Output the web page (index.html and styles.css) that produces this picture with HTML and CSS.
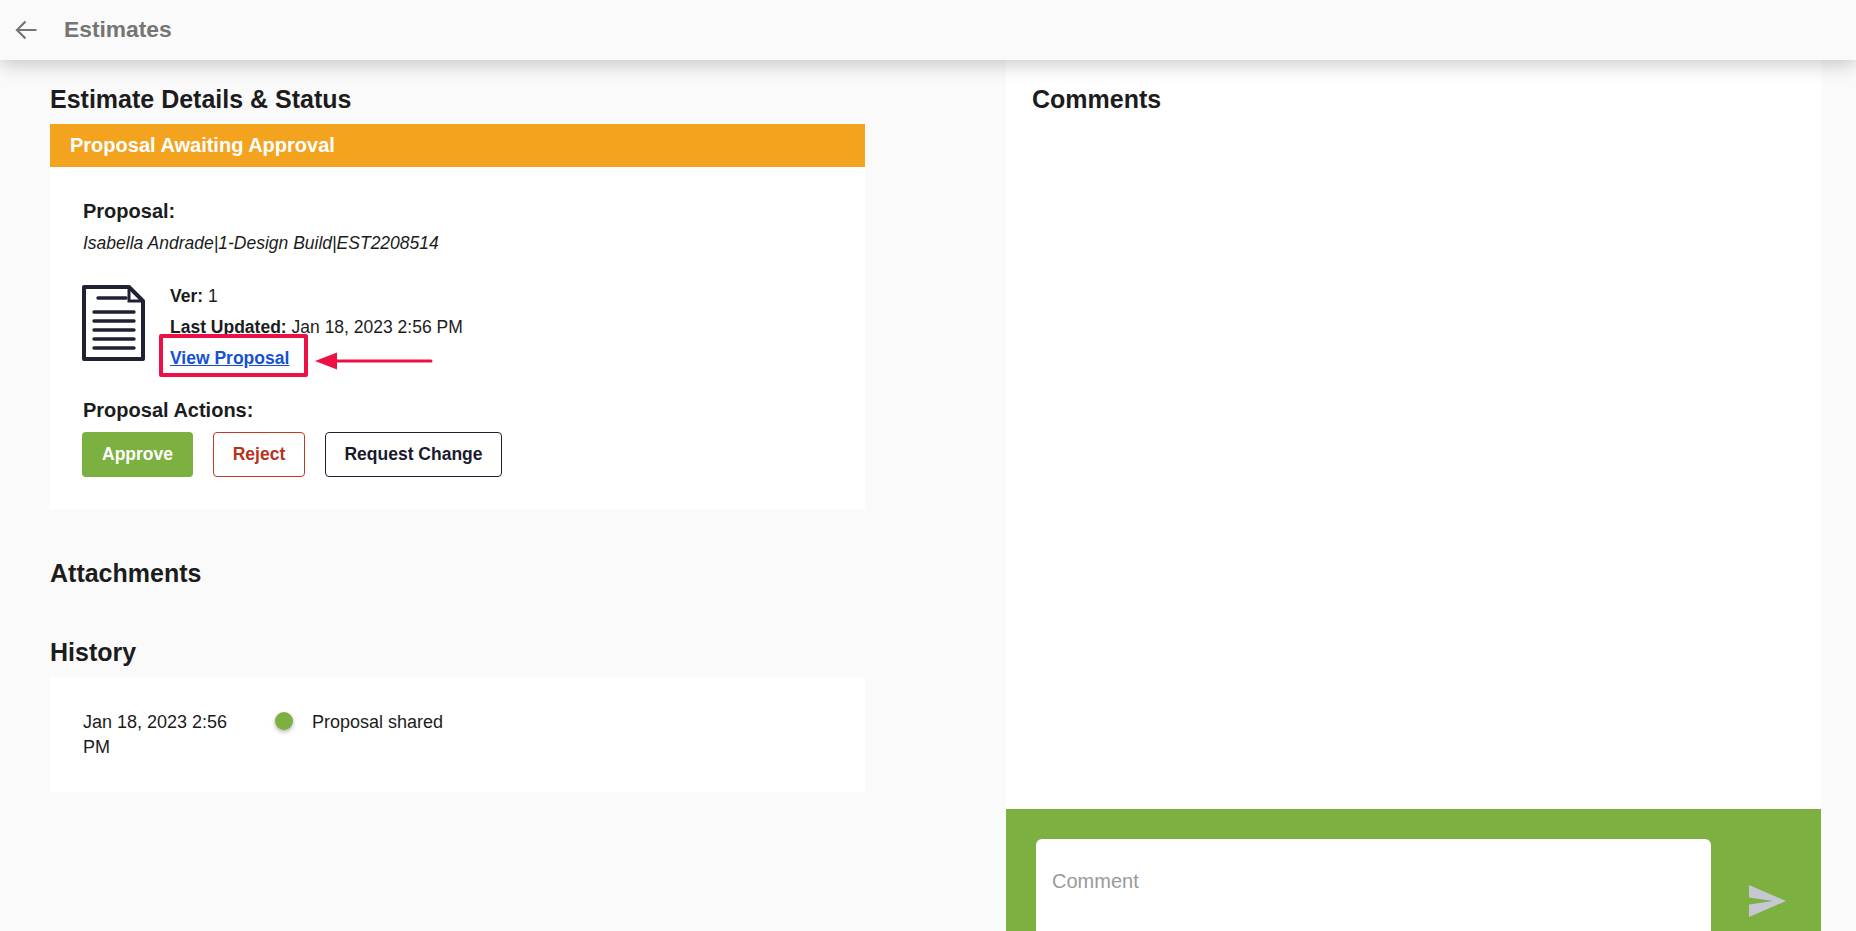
FILE: index.html
```html
<!DOCTYPE html>
<html lang="en">
<head>
<meta charset="utf-8">
<title>Estimates</title>
<link rel="stylesheet" href="styles.css">
</head>
<body>
<header class="topbar">
  <svg class="back" width="24" height="24" viewBox="0 0 24 24"><path d="M22.500 12H3.500M11.500 3.500L3 12l8.500 8.500" fill="none" stroke="#757575" stroke-width="2.200"/></svg>
  <span class="topbar-title">Estimates</span>
</header>
<main class="columns">
  <section class="left">
    <h2 class="heading first">Estimate Details &amp; Status</h2>
    <div class="banner">Proposal Awaiting Approval</div>
    <div class="card proposal">
      <div class="label">Proposal:</div>
      <div class="name">Isabella Andrade|1-Design Build|EST2208514</div>
      <div class="doc-row">
        <svg class="doc" width="63" height="76" viewBox="0 0 63 76">
          <path d="M2 2H47L61 16V74H2Z" fill="#fff" stroke="#1f2235" stroke-width="4" stroke-linejoin="round"/>
          <path d="M47 2V16H61" fill="none" stroke="#1f2235" stroke-width="3"/>
          <path d="M16 13H44M12 27H52M12 36H52M12 45H52M12 54H52M12 63H52" stroke="#1f2235" stroke-width="3.400" stroke-linecap="round"/>
        </svg>
        <div class="doc-info">
          <div class="info-line"><b>Ver:</b> 1</div>
          <div class="info-line"><b>Last Updated:</b> Jan 18, 2023 2:56 PM</div>
          <a class="view-link" href="#">View Proposal</a>
        </div>
      </div>
      <div class="label actions-label">Proposal Actions:</div>
      <div class="actions">
        <button class="btn approve">Approve</button>
        <button class="btn reject">Reject</button>
        <button class="btn change">Request Change</button>
      </div>
      <div class="callout"></div>
      <svg class="arrow" width="118" height="18" viewBox="0 0 118 18"><path d="M0 9L22 0.500V7.500H116a1.500 1.500 0 0 1 0 3H22V17.500Z" fill="#ee1044"/></svg>
    </div>
    <h2 class="heading attachments">Attachments</h2>
    <h2 class="heading history">History</h2>
    <div class="card history-card">
      <div class="history-date">Jan 18, 2023 2:56 PM</div>
      <span class="dot"></span>
      <div class="history-text">Proposal shared</div>
    </div>
  </section>
  <section class="right">
    <div class="comments">
      <h2 class="heading first">Comments</h2>
    </div>
    <div class="composer">
      <div class="comment-box">Comment</div>
      <svg class="send" width="38" height="32" viewBox="0 0 38 32"><path d="M0 0L37 16L0 32V19.500L24 16L0 12.500Z" fill="#c5c8d3"/></svg>
    </div>
  </section>
</main>
</body>
</html>
```
FILE: styles.css
```css
* { box-sizing: border-box; }
html, body { margin: 0; height: 100%; overflow: hidden; }
body { background: #fafafa; color: #1c1c1c; font-family: "Liberation Sans", Arial, sans-serif; font-size: 16px; }
.topbar { position: relative; z-index: 2; height: 60px; display: flex; align-items: center; background: #fafafa; padding-left: 14px; box-shadow: 0 4px 20px rgba(0,0,0,.22); }
.topbar-title { margin-left: 26px; padding-bottom: 2px; font-size: 22.800px; font-weight: 700; color: #757575; }
.back { display: block; }
.columns { display: flex; height: 871px; padding-left: 50px; }
.left { width: 815px; flex: none; }
.right { width: 815px; flex: none; margin-left: 141px; display: flex; flex-direction: column; }
.heading { margin: 0; font-size: 25px; line-height: 30px; font-weight: 700; color: #1c1c1c; }
.heading.first { padding-top: 24px; height: 64px; }
.banner { height: 43px; background: #f4a31f; color: #fff; font-size: 20px; font-weight: 700; line-height: 43px; padding-left: 20px; }
.card { background: #fff; position: relative; }
.proposal { height: 342px; padding: 32px 32px 0; }
.label { font-size: 20px; font-weight: 700; line-height: 24px; margin-left: 1px; }
.name { font-style: italic; margin: 9px 0 0 1px; line-height: 22px; font-size: 17.500px; }
.doc-row { display: flex; margin-top: 30px; }
.doc { display: block; flex: none; margin-top: 1px; }
.doc-info { margin-left: 25px; padding-top: 1px; font-size: 17.500px; }
.info-line { line-height: 22px; margin-bottom: 9px; }
.view-link { display: block; color: #1551d1; font-weight: 700; line-height: 22px; }
.actions-label { margin-top: 29px; }
.actions { display: flex; gap: 20px; margin-top: 10px; }
.btn { height: 45px; border-radius: 4px; font: 700 17.500px "Liberation Sans", Arial, sans-serif; background: #fff; padding: 0; }
.approve { width: 111px; background: #7cb041; color: #fff; border: 0; }
.reject { width: 92px; color: #b5331c; border: 1px solid #c23a22; }
.change { width: 177px; color: #1a1a2e; border: 1px solid #1f2235; }
.callout { position: absolute; left: 109px; top: 167px; width: 149px; height: 43px; border: 4px solid #ee1044; border-radius: 2px; }
.arrow { position: absolute; left: 265px; top: 185px; }
.attachments { margin-top: 49px; }
.history { margin-top: 49px; }
.history-card { margin-top: 10px; height: 115px; display: flex; padding: 33px 32px 0; }
.history-date { width: 150px; line-height: 25px; font-size: 18px; margin-left: 1px; flex: none; }
.dot { width: 18px; height: 18px; border-radius: 50%; background: #7cb041; margin: 2px 0 0 42px; box-shadow: 0 2px 4px rgba(0,0,0,.3); flex: none; }
.history-text { margin-left: 19px; line-height: 25px; font-size: 18px; }
.comments { background: #fff; height: 749px; padding-left: 26px; flex: none; }
.composer { flex: 1; background: #7cb041; display: flex; padding: 30px 0 0 30px; overflow: hidden; }
.comment-box { width: 675px; height: 200px; background: #fff; border-radius: 6px; color: #9a9a9a; font-size: 20px; padding: 30px 16px; line-height: 24px; flex: none; }
.send { margin: 46px 0 0 38px; flex: none; }
```
